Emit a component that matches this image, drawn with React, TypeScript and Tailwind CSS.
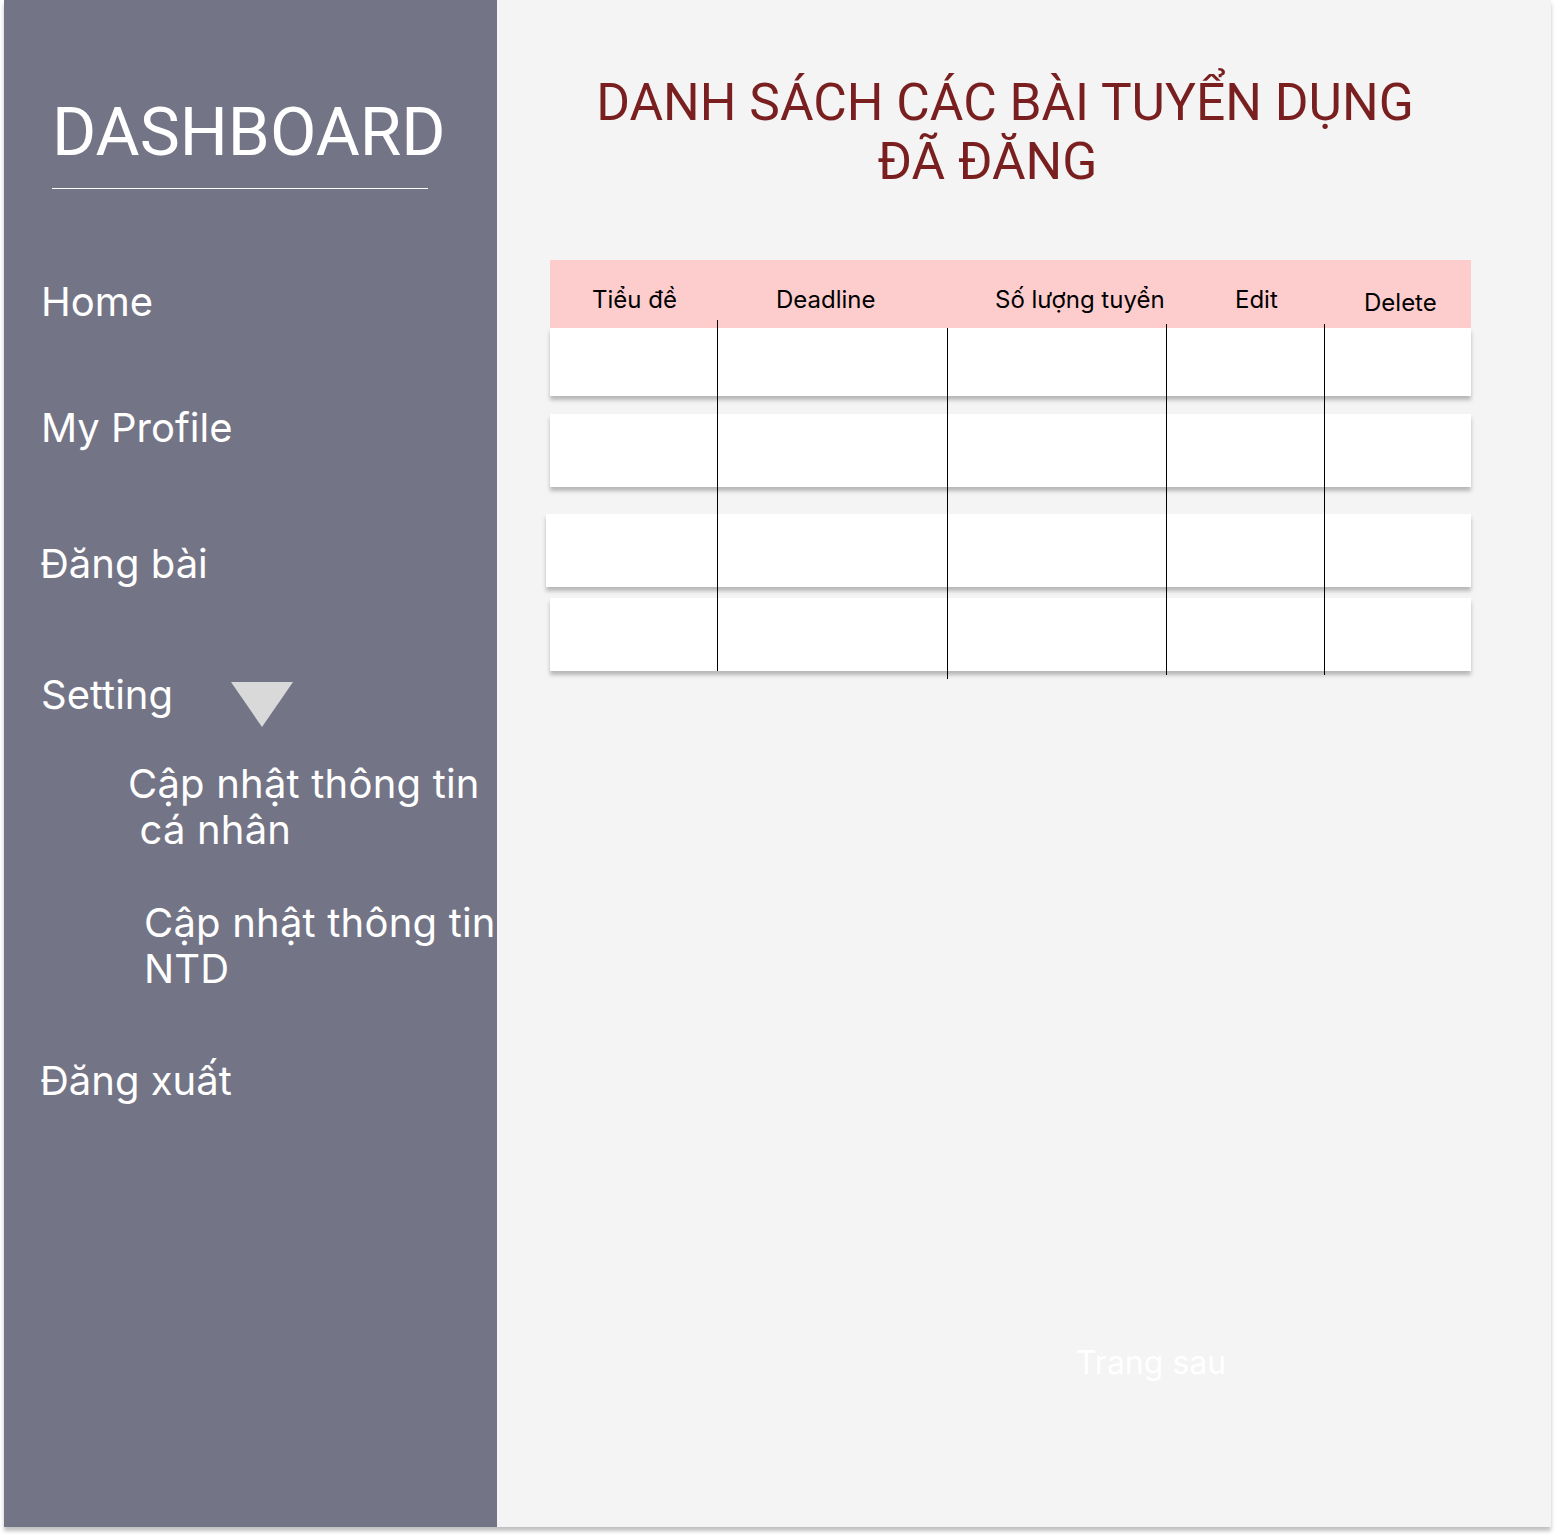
import React from "react";

const navItem = "text-[40px] leading-[46px] text-white";

export default function App() {
  const rows = [
    { h: "h-[68px]", extra: "" },
    { h: "h-[73px]", extra: "mt-[18px]" },
    { h: "h-[73px]", extra: "mt-[27px] -ml-[4px]" },
    { h: "h-[73px]", extra: "mt-[11px]" },
  ];

  return (
    <div className="min-h-[1536px] bg-white font-['Inter',sans-serif]">
      <div className="ml-[4px] flex h-[1527px] w-[1547px] overflow-hidden shadow-[0_4px_4px_rgba(0,0,0,0.25)]">
        {/* sidebar */}
        <aside className="flex w-[493px] shrink-0 flex-col overflow-hidden bg-[#737486] pl-[37px]">
          <div className="ml-[11px] mt-[98px] h-[67px] font-['Roboto',sans-serif] text-[67.5px] leading-[67px] text-white">
            DASHBOARD
          </div>
          <div className="ml-[11px] mt-[23px] h-px w-[376px] bg-white" />

          <div className={`${navItem} mt-[90px]`}>Home</div>
          <div className={`${navItem} mt-[80px]`}>My Profile</div>
          <div className={`${navItem} -ml-[1px] mt-[90px]`}>Đăng bài</div>
          <div className="mt-[85px] flex h-[46px] items-start">
            <div className={`${navItem} w-[190px]`}>Setting</div>
            <svg width="62" height="45" viewBox="0 0 62 45" className="mt-[10px] shrink-0">
              <polygon points="0,0 62,0 31,45" fill="#d9d9d9" />
            </svg>
          </div>
          <div className={`${navItem} ml-[87px] mt-[43px] whitespace-pre tracking-[0.2px]`}>
            {"Cập nhật thông tin\n cá nhân"}
          </div>
          <div className={`${navItem} ml-[103px] mt-[47px] whitespace-pre tracking-[0.2px]`}>
            {"Cập nhật thông tin\nNTD"}
          </div>
          <div className={`${navItem} -ml-[1px] mt-[66px]`}>Đăng xuất</div>
        </aside>

        {/* main */}
        <main className="flex flex-1 flex-col bg-[#f4f4f4]">
          <div className="ml-[63px] w-[890px] pt-[73px] text-center font-['Roboto',sans-serif] text-[51.5px] leading-[59px] text-[#7a1f1f]">
            <div>DANH SÁCH CÁC BÀI TUYỂN DỤNG</div>
            <div className="pr-[35px]">ĐÃ ĐĂNG</div>
          </div>

          <div className="relative ml-[53px] mt-[69px] w-[921px]">
            <div className="flex h-[68px] bg-[#fdcdcd] pl-[42px] pt-[25px] text-[24px] leading-[29px] text-black">
              <div className="w-[184px]">Tiểu đề</div>
              <div className="w-[219px]">Deadline</div>
              <div className="w-[240px]">Số lượng tuyển</div>
              <div className="w-[129px]">Edit</div>
              <div className="mt-[3px]">Delete</div>
            </div>
            {rows.map((r, i) => (
              <div
                key={i}
                className={`${r.h} ${r.extra} bg-white shadow-[0_4px_4px_rgba(0,0,0,0.25)]`}
              />
            ))}
            {/* column dividers */}
            <div className="absolute left-[167px] top-[60px] h-[351px] w-px bg-black" />
            <div className="absolute left-[397px] top-[68px] h-[351px] w-px bg-black" />
            <div className="absolute left-[616px] top-[64px] h-[351px] w-px bg-black" />
            <div className="absolute left-[774px] top-[64px] h-[351px] w-px bg-black" />
          </div>

          <div className="ml-[579px] mt-[673px] text-[32px] leading-[38px] text-white">
            Trang sau
          </div>
        </main>
      </div>
    </div>
  );
}
